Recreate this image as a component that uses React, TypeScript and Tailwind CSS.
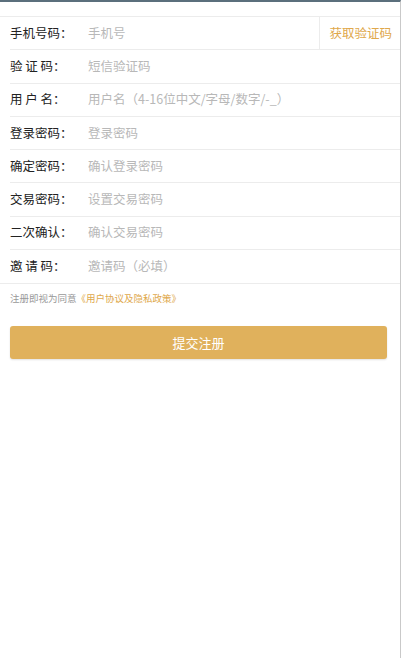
const rows = [
  { label: "手机号码：", placeholder: "手机号", code: true },
  { label: "验 证 码：", placeholder: "短信验证码" },
  { label: "用 户 名：", placeholder: "用户名（4-16位中文/字母/数字/-_）" },
  { label: "登录密码：", placeholder: "登录密码" },
  { label: "确定密码：", placeholder: "确认登录密码" },
  { label: "交易密码：", placeholder: "设置交易密码" },
  { label: "二次确认：", placeholder: "确认交易密码" },
  { label: "邀 请 码：", placeholder: "邀请码（必填）" },
];

const App = () => {
  return (
    <div
      className="min-h-screen w-[401px] bg-white border-t-2 border-t-[#5b6f7c] border-r border-r-[#c9c9c9]"
      style={{ fontFamily: '"Noto Sans CJK SC", "Noto Sans", sans-serif' }}
    >
      <div className="mt-[14px] border-t border-b border-[#ececec]">
        {rows.map((r, i) => (
          <div
            key={r.label}
            className={`flex items-center h-[33.25px] ${i < rows.length - 1 ? "ml-[10px] border-b border-[#ececec]" : "pl-[10px]"}`}
          >
            <span className="w-[78px] shrink-0 text-[12.5px] text-[#222] whitespace-pre">{r.label}</span>
            <span className="flex-1 text-[12.5px] text-[#b8b8b8] whitespace-nowrap">{r.placeholder}</span>
            {r.code && (
              <span className="h-full flex items-center border-l border-[#ececec] pl-[9px] pr-[8px] text-[12.5px] text-[#e0a84b]">
                获取验证码
              </span>
            )}
          </div>
        ))}
      </div>
      <p className="mt-[7px] ml-[10px] text-[9.5px] leading-[14px] text-[#999]">
        注册即视为同意<span className="text-[#e0a84b]">《用户协议及隐私政策》</span>
      </p>
      <button className="mt-[21px] ml-[10px] w-[377px] h-[33px] rounded-[3px] bg-[#e0b15c] text-white text-[13px] shadow-[0_1px_2px_rgba(0,0,0,0.12)]">
        提交注册
      </button>
    </div>
  );
};

export default App;
